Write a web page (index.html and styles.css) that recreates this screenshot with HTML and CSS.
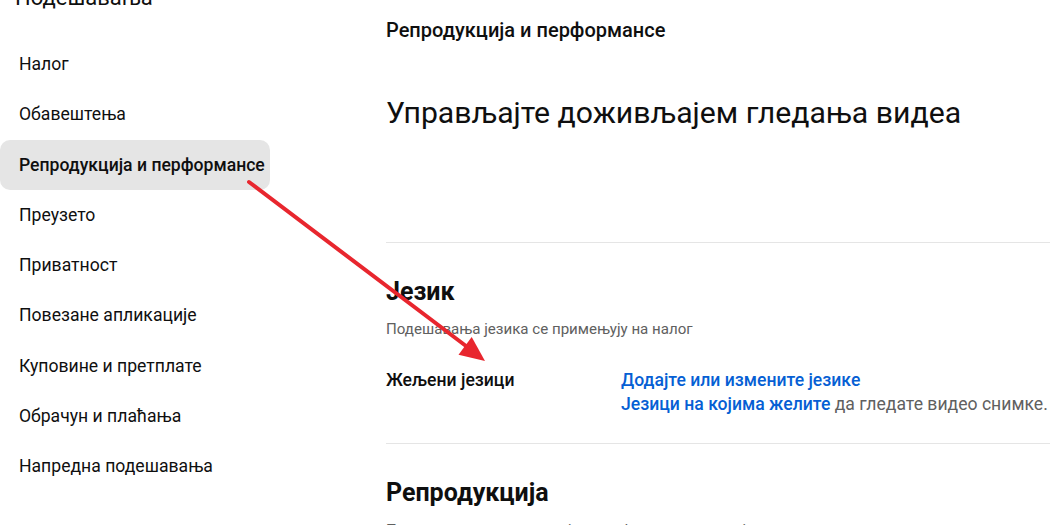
FILE: index.html
```html
<!DOCTYPE html>
<html lang="sr">
<head>
    <meta charset="UTF-8">
    <meta name="viewport" content="width=device-width, initial-scale=1.0">
    <title>Подешавања</title>
    <link rel="stylesheet" href="styles.css">
</head>
<body>
    <div class="page">
        <aside class="sidebar">
            <h2 class="sidebar-title">Подешавања</h2>
            <nav class="menu">
                <a href="#" class="menu-item">Налог</a>
                <a href="#" class="menu-item">Обавештења</a>
                <a href="#" class="menu-item active">Репродукција и перформансе</a>
                <a href="#" class="menu-item">Преузето</a>
                <a href="#" class="menu-item">Приватност</a>
                <a href="#" class="menu-item">Повезане апликације</a>
                <a href="#" class="menu-item">Куповине и претплате</a>
                <a href="#" class="menu-item">Обрачун и плаћања</a>
                <a href="#" class="menu-item">Напредна подешавања</a>
            </nav>
        </aside>

        <main class="content">
            <div class="breadcrumb">Репродукција и перформансе</div>
            <h1 class="page-title">Управљајте доживљајем гледања видеа</h1>

            <section class="section">
                <h3 class="section-title">Језик</h3>
                <p class="section-desc">Подешавања језика се примењују на налог</p>
                <div class="setting-row">
                    <div class="setting-label">Жељени језици</div>
                    <div class="setting-value">
                        <a href="#" class="link">Додајте или измените језике</a>
                        <div><a href="#" class="link">Језици на којима желите</a> да гледате видео снимке.</div>
                    </div>
                </div>
            </section>

            <section class="section">
                <h3 class="section-title">Репродукција</h3>
                <p class="section-desc">Подешавања репродукције и перформанси за овај прегледач</p>
            </section>
        </main>
    </div>

    <!-- annotation arrow -->
    <svg class="arrow" width="1050" height="525" viewBox="0 0 1050 525">
        <line x1="249" y1="182" x2="466" y2="346" stroke="#e8262e" stroke-width="4" stroke-linecap="round"/>
        <polygon points="485,361 458.5,354.7 471.7,337.1" fill="#e8262e"/>
    </svg>
</body>
</html>
```

FILE: styles.css
```css
* {
    margin: 0;
    padding: 0;
    box-sizing: border-box;
}

body {
    font-family: Roboto, "Noto Sans", Arial, sans-serif;
    background: #fff;
    color: #0f0f0f;
    width: 1050px;
    height: 525px;
    overflow: hidden;
    position: relative;
}

.page {
    display: flex;
}

/* Sidebar */
.sidebar {
    width: 386px;
    flex-shrink: 0;
}

.sidebar-title {
    font-size: 22px;
    font-weight: 400;
    line-height: 28px;
    margin-top: -16px;
    margin-bottom: 27px;
    padding-left: 15px;
    color: #0f0f0f;
}

.menu {
    display: flex;
    flex-direction: column;
    width: 270px;
}

.menu-item {
    display: flex;
    align-items: center;
    height: 50.25px;
    padding-left: 19px;
    font-size: 17.6px;
    color: #0f0f0f;
    text-decoration: none;
    border-radius: 10px;
    white-space: nowrap;
}

.menu-item.active {
    background: #e5e5e5;
    font-weight: 500;
}

/* Main content */
.content {
    flex: 1;
    padding-top: 18px;
}

.breadcrumb {
    font-size: 20px;
    font-weight: 500;
    line-height: 24px;
}

.page-title {
    font-size: 30.2px;
    font-weight: 400;
    line-height: 40px;
    margin-top: 51px;
    margin-bottom: 109px;
}

.section {
    border-top: 1px solid #e5e5e5;
    padding-top: 33px;
    padding-bottom: 27px;
}

.section-title {
    font-size: 25px;
    font-weight: 700;
    line-height: 32px;
}

.section-desc {
    font-size: 15.1px;
    color: #606060;
    line-height: 20px;
    margin-top: 11px;
}

.setting-row {
    display: flex;
    margin-top: 29px;
    font-size: 17.6px;
    line-height: 24px;
}

.setting-label {
    width: 235px;
    font-weight: 500;
}

.setting-value {
    color: #606060;
    white-space: nowrap;
}

.link {
    color: #065fd4;
    font-weight: 500;
    text-decoration: none;
}

/* Annotation overlay */
.arrow {
    position: absolute;
    top: 0;
    left: 0;
    pointer-events: none;
}
```
